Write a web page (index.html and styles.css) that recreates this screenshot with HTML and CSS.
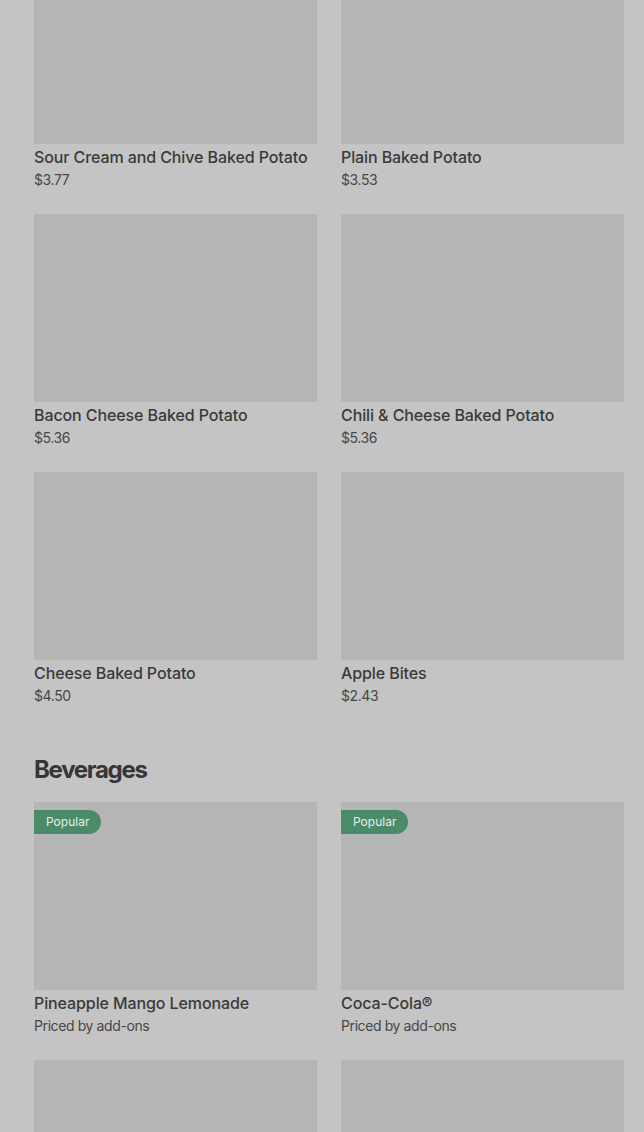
FILE: index.html
```html
<!DOCTYPE html>
<html lang="en">
<head>
    <meta charset="UTF-8">
    <meta name="viewport" content="width=device-width, initial-scale=1.0">
    <title>Menu</title>
    <link rel="stylesheet" href="styles.css">
</head>
<body>

    <div class="menu">
        <!-- Sides -->
        <div class="item-grid">
            <div class="item">
                <div class="item-image"></div>
                <div class="item-name">Sour Cream and Chive Baked Potato</div>
                <div class="item-price">$3.77</div>
            </div>
            <div class="item">
                <div class="item-image"></div>
                <div class="item-name">Plain Baked Potato</div>
                <div class="item-price">$3.53</div>
            </div>
            <div class="item">
                <div class="item-image"></div>
                <div class="item-name">Bacon Cheese Baked Potato</div>
                <div class="item-price">$5.36</div>
            </div>
            <div class="item">
                <div class="item-image"></div>
                <div class="item-name">Chili &amp; Cheese Baked Potato</div>
                <div class="item-price">$5.36</div>
            </div>
            <div class="item">
                <div class="item-image"></div>
                <div class="item-name">Cheese Baked Potato</div>
                <div class="item-price">$4.50</div>
            </div>
            <div class="item">
                <div class="item-image"></div>
                <div class="item-name">Apple Bites</div>
                <div class="item-price">$2.43</div>
            </div>
        </div>

        <!-- Beverages -->
        <h2 class="section-title">Beverages</h2>
        <div class="item-grid">
            <div class="item">
                <div class="item-image">
                    <span class="badge">Popular</span>
                </div>
                <div class="item-name">Pineapple Mango Lemonade</div>
                <div class="item-price">Priced by add-ons</div>
            </div>
            <div class="item">
                <div class="item-image">
                    <span class="badge">Popular</span>
                </div>
                <div class="item-name">Coca-Cola®</div>
                <div class="item-price">Priced by add-ons</div>
            </div>
            <div class="item">
                <div class="item-image"></div>
                <div class="item-name"></div>
                <div class="item-price"></div>
            </div>
            <div class="item">
                <div class="item-image"></div>
                <div class="item-name"></div>
                <div class="item-price"></div>
            </div>
        </div>
    </div>

</body>
</html>
```

FILE: styles.css
```css
* {
    margin: 0;
    padding: 0;
    box-sizing: border-box;
    font-family: Inter, Roboto, "Liberation Sans", sans-serif;
}

body {
    background-color: #c4c4c4;
    color: #3a3a3a;
    overflow: hidden;
}

.menu {
    margin-top: -44px;
    padding: 0 20px 0 34px;
}

.item-grid {
    display: grid;
    grid-template-columns: 1fr 1fr;
    column-gap: 24px;
    row-gap: 24px;
}

.item-image {
    position: relative;
    height: 188px;
    background-color: #b5b5b5;
    margin-bottom: 2px;
}

.item-name {
    font-size: 16px;
    font-weight: 500;
    line-height: 22px;
    height: 24px;
    letter-spacing: -0.1px;
    color: #3a3a3a;
}

.item-price {
    font-size: 14px;
    line-height: 20px;
    height: 20px;
    letter-spacing: -0.4px;
    color: #474747;
}

.section-title {
    font-size: 24px;
    font-weight: 700;
    line-height: 32px;
    letter-spacing: -1.3px;
    color: #363636;
    margin: 48px 0 16px;
}

.badge {
    position: absolute;
    top: 8px;
    left: 0;
    height: 24px;
    line-height: 24px;
    padding: 0 12px;
    font-size: 12px;
    color: #e4efe8;
    background-color: #4c8b69;
    border-radius: 0 12px 12px 0;
}
```
